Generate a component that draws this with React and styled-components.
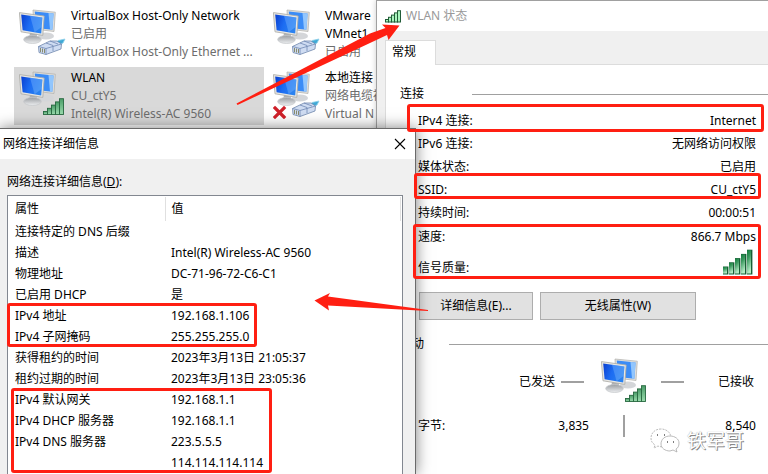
import React from 'react';
import styled, { createGlobalStyle } from 'styled-components';

const red = '#ff1f12';

const GlobalStyle = createGlobalStyle`
  * {
    box-sizing: border-box;
  }

  body {
    margin: 0;
    background: #fff;
    color: #000;
    font-family: 'Noto Sans', 'Noto Sans CJK SC', sans-serif;
    font-size: 12px;
    line-height: 18px;
  }

  button {
    font: inherit;
    color: inherit;
  }

  svg {
    display: block;
  }
`;

const Desktop = styled.main`
  position: relative;
  min-height: 100vh;
  overflow: hidden;
`;

const AdapterGrid = styled.section`
  display: grid;
  grid-template-columns: 250px 250px;
  gap: 4px;
  padding: 5px 14px;
`;

const Adapter = styled.article`
  display: flex;
  gap: 7px;
  height: 58px;
  padding: 2px 5px;
  background: ${({ $selected }) => ($selected ? '#d9d9d9' : 'transparent')};
`;

const AdapterIcon = styled.div`
  flex: none;
  width: 45px;
  padding-top: 1px;
  overflow: visible;
`;

const AdapterText = styled.div`
  color: #6d6d6d;
  white-space: nowrap;

  h3 {
    margin: 0;
    color: #000;
    font-size: 12px;
    font-weight: 400;
  }

  p {
    margin: 0;
  }
`;

const Window = styled.section`
  position: absolute;
  bottom: 0;
  display: flex;
  flex-direction: column;
  background: #f0f0f0;
`;

const StatusWindow = styled(Window)`
  top: 0;
  left: 376px;
  right: 0;
  border: solid #a0a0a0;
  border-width: 1px 0 0 1px;
  box-shadow: 0 0 6px rgba(0, 0, 0, 0.2);
`;

const DetailsWindow = styled(Window)`
  top: 128px;
  left: 0;
  width: 416px;
  border: solid #6a6a6a;
  border-width: 1px 1px 0 0;
  box-shadow: 0 0 14px rgba(0, 0, 0, 0.5);
`;

const TitleBar = styled.header`
  display: flex;
  align-items: center;
  gap: 5px;
  height: 30px;
  padding: ${({ $inactive }) => ($inactive ? '0 8px' : '0 9px 0 3px')};
  background: #fff;
  color: ${({ $inactive }) => ($inactive ? '#999' : '#000')};

  h2 {
    flex: 1;
    margin: 0;
    font-size: 12px;
    font-weight: 400;
  }
`;

const CloseButton = styled.button`
  padding: 0;
  border: 0;
  background: none;
`;

const Tabs = styled.div`
  display: flex;
  margin: 9px 0 0 8px;
`;

const Tab = styled.button`
  width: 51px;
  height: 25px;
  padding: 0 0 2px 6px;
  border: solid #dcdcdc;
  border-width: 1px 1px 0;
  background: #fff;
  text-align: left;
`;

const TabRule = styled.div`
  flex: 1;
  border-bottom: 1px solid #dcdcdc;
`;

const TabPanel = styled.div`
  flex: 1;
  margin-left: 8px;
  padding: 20px 0 0 14px;
  border-left: 1px solid #dcdcdc;
  background: #fff;
`;

const GroupTitle = styled.h3`
  display: flex;
  align-items: center;
  gap: ${({ $gap }) => $gap}px;
  margin: 0;
  font-size: 12px;
  font-weight: 400;

  &::after {
    content: '';
    flex: 1;
    height: 1px;
    background: #a0a0a0;
  }
`;

const Facts = styled.dl`
  margin: 6px 12px 0 18px;
`;

const Fact = styled.div`
  display: flex;
  align-items: center;
  justify-content: space-between;
  height: ${({ $height }) => $height || 23}px;

  dd {
    margin: 0;
  }
`;

const SignalValue = styled.dd`
  padding: 0 3px 12px 0;
`;

const Buttons = styled.div`
  display: flex;
  gap: 7px;
  margin: 6px 0 15px 19px;
`;

const PushButton = styled.button`
  width: ${({ $wide }) => ($wide ? 156 : 114)}px;
  height: 28px;
  padding: 0;
  border: 1px solid #adadad;
  background: #e1e1e1;
`;

const Traffic = styled.div`
  display: grid;
  grid-template-columns: 155px 46px 48px 1fr;
  align-items: center;
  margin: 4px 14px 0 0;
  text-align: right;
`;

const Flow = styled.span`
  height: 2px;
  margin: 0 17px 0 6px;
  background: #a0a0a0;
`;

const Received = styled.div`
  display: flex;
  align-items: center;
  justify-content: space-between;
  padding-left: 12px;

  &::before {
    content: '';
    width: 23px;
    height: 2px;
    background: #a0a0a0;
  }
`;

const Bytes = styled.div`
  display: grid;
  grid-template-columns: 60px 111px 36px 1fr;
  align-items: center;
  margin: 9px 12px 0 18px;
  line-height: 16px;
  text-align: right;

  span:first-child {
    text-align: left;
  }
`;

const Divider = styled.i`
  height: 22px;
  border-right: 2px solid #a0a0a0;
`;

const DetailsBody = styled.div`
  flex: 1;
  display: flex;
  flex-direction: column;
  padding: 14px 12px 0 7px;
`;

const DetailsLabel = styled.p`
  margin: 0 0 4px;
`;

const ListBox = styled.div`
  flex: 1;
  padding: 1px;
  border: solid #828790;
  border-width: 1px 1px 0;
  background: #fff;
`;

const DetailsTable = styled.table`
  width: 100%;
  table-layout: fixed;
  border-collapse: collapse;
  text-align: left;

  th {
    height: 24px;
    border-right: 1px solid #e0e0e0;
  }

  th:first-child {
    width: 156px;
  }

  th,
  td {
    padding: 0 6px;
    font-weight: 400;
    white-space: nowrap;
  }

  td {
    height: 21px;
  }
`;

const Highlight = styled.div`
  position: absolute;
  top: ${({ $top }) => $top}px;
  left: ${({ $left }) => $left}px;
  right: ${({ $right }) => ($right ? `${$right}px` : 'auto')};
  width: ${({ $width }) => ($width ? `${$width}px` : 'auto')};
  height: ${({ $height }) => $height}px;
  border: 3px solid ${red};
  border-radius: 3px;
`;

const Arrows = styled.svg`
  position: absolute;
  top: 0;
  left: 0;
  pointer-events: none;
`;

const Watermark = styled.div`
  position: absolute;
  right: 24px;
  bottom: 20px;
  display: flex;
  align-items: center;
  gap: 7px;
  color: #fff;
  font-size: 19px;
  line-height: 20px;
  text-shadow: 1px 1px 0 #888, 0 0 1px #999;
`;

const levels = [0, 1, 2, 3, 4];

const SignalBars = () => (
  <svg width="16" height="13" viewBox="0 0 16 13" aria-hidden="true">
    {levels.map(i => (
      <rect
        key={i}
        x={0.5 + i * 3}
        y={9.5 - i * 2.2}
        width="3"
        height={2.5 + i * 2.2}
        fill="#a8f5bd"
        stroke="#225c38"
      />
    ))}
  </svg>
);

const SignalStrength = () => (
  <svg width="31" height="26" viewBox="0 0 31 26" aria-label="信号质量">
    <defs>
      <linearGradient id="strength" x2="0.3" y2="1">
        <stop offset="0" stopColor="#117a3c" />
        <stop offset="0.4" stopColor="#3c9a60" />
        <stop offset="1" stopColor="#b4ecc6" />
      </linearGradient>
    </defs>
    {levels.map(i => (
      <g key={i}>
        <rect x={1 + i * 6} y={17.5 - i * 4.2} width="5.4" height={8 + i * 4.2} fill="#185f35" />
        <rect x={1 + i * 6} y={18 - i * 4.2} width="4" height={6.5 + i * 4.2} fill="url(#strength)" />
      </g>
    ))}
  </svg>
);

const Computers = ({ wireless, error }) => (
  <svg width="47" height="49" viewBox="0 0 47 49" aria-hidden="true">
    <defs>
      <linearGradient id="screen" x2="1" y2="0.3">
        <stop offset="0" stopColor="#0a3fd0" />
        <stop offset="0.5" stopColor="#1c6cf2" />
        <stop offset="1" stopColor="#2a82f0" />
      </linearGradient>
      <linearGradient id="stand" x2="0" y2="1">
        <stop offset="0" stopColor="#9a9da1" />
        <stop offset="1" stopColor="#eceef0" />
      </linearGradient>
      <linearGradient id="bars" x2="0" y2="1">
        <stop offset="0" stopColor="#4a9d68" />
        <stop offset="1" stopColor="#9bdcae" />
      </linearGradient>
    </defs>
    <ellipse cx="27" cy="28" rx="8" ry="3.6" fill="#d4d6d9" />
    <path d="M14 2 36.3 4.2 35 23.5 15 21z" fill="#dfdfdc" stroke="#b0afab" strokeWidth="0.7" />
    <path d="M15.8 3.6 34.6 5.6 33.4 21.8 17 20z" fill="#3b8cf6" />
    <path d="M29.5 5 34.6 5.6 33.4 21.8 31 21.5z" fill="#a9d5ff" opacity="0.8" />
    <path d="M11 25 18 26 18 31 10 30z" fill="url(#stand)" />
    <ellipse cx="13.5" cy="31.5" rx="8.8" ry="4" fill="url(#stand)" stroke="#c3c5c8" strokeWidth="0.7" />
    <path d="M0.4 4.6 25.2 8 23.8 27.4 2 23.8z" fill="#e8e7e3" stroke="#aaa9a5" strokeWidth="0.8" />
    <path d="M2.2 6.4 23.4 9.4 22.2 25.4 3.6 22.2z" fill="url(#screen)" />
    <path d="M11 7.7 23.4 9.4 22.6 19 15.6 24.2z" fill="#7db8ff" opacity="0.4" />
    {wireless ? (
      <g fill="url(#bars)" stroke="#276840" strokeWidth="0.9">
        {levels.map(i => (
          <rect key={i} x={24.5 + i * 4} y={41.5 - i * 3.2} width="4" height={3 + i * 3.2} />
        ))}
      </g>
    ) : (
      <g strokeLinejoin="round" strokeWidth="0.8">
        <path d="M37 35 39 32.5 46 31 44 35 40 37z" fill="#3fa9d6" stroke="#8fd0e8" />
        <path d="M19.5 38.5 31 33 38 33 42.5 36 42 41 27 46.5 20 44.5z" fill="#cfdcf2" stroke="#6f86ac" />
        <path d="M19.5 38.5 27 40.5 42.5 36M27 40.5V46.5M27 35 34 37.5V43M31 33 39 36" fill="none" stroke="#7088b4" />
        <path d="M21.5 40v4M23.5 40.5v4M25.5 41v4" stroke="#77774c" />
      </g>
    )}
    {error && (
      <path d="M2 38 11 47M11 38 2 47" stroke="#cf2029" strokeWidth="3.2" strokeLinecap="square" />
    )}
  </svg>
);

const adapters = [
  { name: 'VirtualBox Host-Only Network', lines: ['已启用', 'VirtualBox Host-Only Ethernet ...'] },
  { name: 'VMware', lines: ['已启用'], secondName: 'VMnet1' },
  { name: 'WLAN', lines: ['CU_ctY5', 'Intel(R) Wireless-AC 9560'], wireless: true, selected: true },
  { name: '本地连接', lines: ['网络电缆被', 'Virtual N'], error: true },
];

const facts = [
  ['IPv4 连接:', 'Internet'],
  ['IPv6 连接:', '无网络访问权限'],
  ['媒体状态:', '已启用'],
  ['SSID:', 'CU_ctY5'],
  ['持续时间:', '00:00:51'],
  ['速度:', '866.7 Mbps', 26],
];

const details = [
  ['连接特定的 DNS 后缀', ''],
  ['描述', 'Intel(R) Wireless-AC 9560'],
  ['物理地址', 'DC-71-96-72-C6-C1'],
  ['已启用 DHCP', '是'],
  ['IPv4 地址', '192.168.1.106'],
  ['IPv4 子网掩码', '255.255.255.0'],
  ['获得租约的时间', '2023年3月13日 21:05:37'],
  ['租约过期的时间', '2023年3月13日 23:05:36'],
  ['IPv4 默认网关', '192.168.1.1'],
  ['IPv4 DHCP 服务器', '192.168.1.1'],
  ['IPv4 DNS 服务器', '223.5.5.5'],
  ['', '114.114.114.114'],
];

const Status = () => (
  <StatusWindow>
    <TitleBar $inactive>
      <SignalBars />
      <h2>WLAN 状态</h2>
    </TitleBar>
    <Tabs>
      <Tab>常规</Tab>
      <TabRule />
    </Tabs>
    <TabPanel>
      <GroupTitle $gap={48}>连接</GroupTitle>
      <Facts>
        {facts.map(([label, value, height]) => (
          <Fact key={label} $height={height}>
            <dt>{label}</dt>
            <dd>{value}</dd>
          </Fact>
        ))}
        <Fact $height={36}>
          <dt>信号质量:</dt>
          <SignalValue>
            <SignalStrength />
          </SignalValue>
        </Fact>
      </Facts>
      <Buttons>
        <PushButton>详细信息(E)...</PushButton>
        <PushButton $wide>无线属性(W)</PushButton>
      </Buttons>
      <GroupTitle $gap={25}>活动</GroupTitle>
      <Traffic>
        <span>已发送</span>
        <Flow />
        <Computers wireless />
        <Received>已接收</Received>
      </Traffic>
      <Bytes>
        <span>字节:</span>
        <span>3,835</span>
        <Divider />
        <span>8,540</span>
      </Bytes>
    </TabPanel>
  </StatusWindow>
);

const Details = () => (
  <DetailsWindow>
    <TitleBar>
      <h2>网络连接详细信息</h2>
      <CloseButton aria-label="关闭">
        <svg width="12" height="12" viewBox="0 0 12 12">
          <path d="M1 1 11 11M11 1 1 11" stroke="#000" strokeWidth="1.1" />
        </svg>
      </CloseButton>
    </TitleBar>
    <DetailsBody>
      <DetailsLabel>
        网络连接详细信息(<u>D</u>):
      </DetailsLabel>
      <ListBox>
        <DetailsTable>
          <thead>
            <tr>
              <th>属性</th>
              <th>值</th>
            </tr>
          </thead>
          <tbody>
            {details.map(([property, value]) => (
              <tr key={property}>
                <td>{property}</td>
                <td>{value}</td>
              </tr>
            ))}
          </tbody>
        </DetailsTable>
      </ListBox>
    </DetailsBody>
  </DetailsWindow>
);

const App = () => (
  <>
    <GlobalStyle />
    <Desktop>
      <AdapterGrid>
        {adapters.map(({ name, secondName, lines, wireless, error, selected }) => (
          <Adapter key={name} $selected={selected}>
            <AdapterIcon>
              <Computers wireless={wireless} error={error} />
            </AdapterIcon>
            <AdapterText>
              <h3>{name}</h3>
              {secondName && <h3>{secondName}</h3>}
              {lines.map(line => (
                <p key={line}>{line}</p>
              ))}
            </AdapterText>
          </Adapter>
        ))}
      </AdapterGrid>

      <Status />
      <Details />

      <Highlight $top={104} $left={407} $right={4} $height={28} />
      <Highlight $top={173} $left={414} $right={7} $height={26} />
      <Highlight $top={224} $left={413} $right={7} $height={55} />
      <Highlight $top={303} $left={7} $width={250} $height={44} />
      <Highlight $top={388} $left={11} $width={261} $height={85} />

      <Arrows width="440" height="330" viewBox="0 0 440 330" fill={red} aria-hidden="true">
        <path d="M236.5 103.5 370 33.5 385.5 28 382 24.5 399.5 25.5 388.5 40 387 35 370 43 237.5 105z" />
        <path d="M428 310 328 296.5 330 293 314.5 300.5 329 310.5 328 305.5 428 311z" />
      </Arrows>

      <Watermark>
        <svg width="30" height="26" viewBox="0 0 30 26" fill="#fff" stroke="#aaa" strokeWidth="0.8" aria-hidden="true">
          <path d="M11 1C5 1 1 5 1 10c0 3 1 5 4 7l-1 3 4-2c2 1 4 1 6 0 4-1 7-4 7-8 0-5-4-9-10-9z" strokeDasharray="2 1" />
          <path d="M20 8c-5 0-9 3-9 8 0 4 4 7 9 7l3-1 4 2-1-3c2-1 3-3 3-6 0-4-4-7-9-7z" />
          <path d="M7 7h1M14 7h1M17 14h1M23 14h1" stroke="#555" strokeWidth="1.5" />
        </svg>
        铁军哥
      </Watermark>
    </Desktop>
  </>
);

export default App;
